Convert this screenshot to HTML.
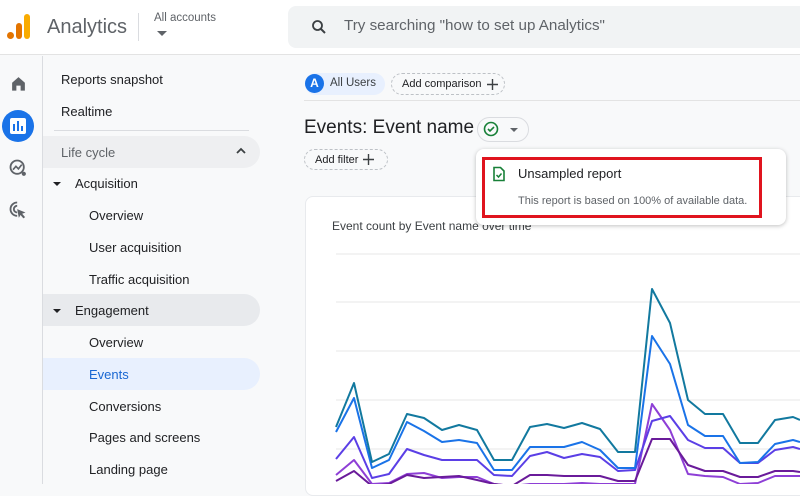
<!DOCTYPE html>
<html><head><style>
*{margin:0;padding:0;box-sizing:border-box}
body{width:800px;height:484px;overflow:hidden;background:#f8f9fa;font-family:"Liberation Sans",Arial,sans-serif;color:#202124;position:relative}
.abs{position:absolute}
.hdr{left:0;top:0;width:800px;height:55px;background:#fff;border-bottom:1px solid #e3e3e3}
.nav{left:42px;top:56px;width:1px;height:428px;background:#dadce0}
.item{position:absolute;font-size:13px;white-space:nowrap}
.pill{position:absolute;left:43px;width:217px;height:32px;border-radius:0 16px 16px 0}
.chip{position:absolute;height:22px;border-radius:11px;border:1px dashed #bdc1c6;font-size:11px;display:flex;align-items:center;padding-left:10px;color:#202124;white-space:nowrap}
.chip svg{margin-left:5px}
</style></head><body>
<div class="abs hdr"></div>
<div class="abs" style="left:7px;top:32px;width:7px;height:7px;border-radius:50%;background:#e37400"></div>
<div class="abs" style="left:16px;top:23px;width:6px;height:16px;border-radius:3px;background:#e37400"></div>
<div class="abs" style="left:24px;top:14px;width:6px;height:25px;border-radius:3px;background:#f9ab00"></div>
<div class="abs" style="left:47px;top:16px;font-size:20px;color:#5f6368">Analytics</div>
<div class="abs" style="left:138px;top:13px;width:1px;height:28px;background:#dadce0"></div>
<div class="abs" style="left:154px;top:12px;font-size:11.5px;color:#5f6368">All accounts</div>
<div class="abs" style="left:157px;top:31px;width:0;height:0;border-left:5px solid transparent;border-right:5px solid transparent;border-top:5px solid #5f6368"></div>
<div class="abs" style="left:288px;top:6px;width:520px;height:42px;background:#f1f3f4;border-radius:8px"></div>
<svg class="abs" style="left:310px;top:18px" width="18" height="18" viewBox="0 0 24 24"><circle cx="10" cy="10" r="6" fill="none" stroke="#3c4043" stroke-width="2.4"/><path d="M14.5 14.5L20 20" stroke="#3c4043" stroke-width="2.6"/></svg>
<div class="abs" style="left:344px;top:17px;font-size:15.2px;color:#5f6368">Try searching "how to set up Analytics"</div>
<div class="abs nav"></div>
<svg class="abs" style="left:10px;top:75px" width="17" height="17" viewBox="0 0 24 24"><path d="M3 11L12 3l9 8v11h-6v-7H9v7H3z" fill="#5f6368"/></svg>
<div class="abs" style="left:2px;top:110px;width:32px;height:32px;border-radius:50%;background:#1a73e8"></div>
<div class="abs" style="left:10px;top:118px;width:16px;height:16px;border-radius:2px;background:#fff"></div>
<div class="abs" style="left:13px;top:124px;width:2px;height:7px;background:#1a73e8"></div>
<div class="abs" style="left:17px;top:121px;width:2px;height:10px;background:#1a73e8"></div>
<div class="abs" style="left:21px;top:126px;width:2px;height:5px;background:#1a73e8"></div>
<svg class="abs" style="left:8px;top:158px" width="20" height="20" viewBox="0 0 24 24"><circle cx="11" cy="11" r="8" fill="none" stroke="#5f6368" stroke-width="2.2"/><path d="M6 14l3.5-4 3 3 4-5" fill="none" stroke="#5f6368" stroke-width="2"/><circle cx="19" cy="19" r="2.5" fill="#5f6368"/></svg>
<svg class="abs" style="left:8px;top:200px" width="20" height="20" viewBox="0 0 24 24"><path d="M11 3a8 8 0 1 0 0 16" fill="none" stroke="#5f6368" stroke-width="2.2"/><path d="M11 7a4 4 0 1 0 0 8" fill="none" stroke="#5f6368" stroke-width="2.2"/><path d="M11 11l10 4-4 1.5 3.5 4-2 1.5-3.5-4-2 3.5z" fill="#5f6368"/></svg>
<div class="item" style="left:61px;top:72px">Reports snapshot</div>
<div class="item" style="left:61px;top:104px">Realtime</div>
<div class="abs" style="left:54px;top:130px;width:195px;height:1px;background:#dadce0"></div>
<div class="pill" style="top:136px;background:#eeeff1"></div>
<div class="item" style="left:61px;top:145px;color:#5f6368">Life cycle</div>
<svg class="abs" style="left:235px;top:146px" width="12" height="10" viewBox="0 0 12 10"><path d="M2 7l4-4 4 4" fill="none" stroke="#3c4043" stroke-width="1.8"/></svg>
<div class="abs" style="left:53px;top:182px;border-left:4px solid transparent;border-right:4px solid transparent;border-top:4px solid #202124"></div>
<div class="item" style="left:75px;top:176px">Acquisition</div>
<div class="item" style="left:89px;top:208px">Overview</div>
<div class="item" style="left:89px;top:240px">User acquisition</div>
<div class="item" style="left:89px;top:272px">Traffic acquisition</div>
<div class="pill" style="top:294px;background:#e8eaed"></div>
<div class="abs" style="left:53px;top:309px;border-left:4px solid transparent;border-right:4px solid transparent;border-top:4px solid #202124"></div>
<div class="item" style="left:75px;top:303px">Engagement</div>
<div class="item" style="left:89px;top:335px">Overview</div>
<div class="pill" style="top:358px;background:#e8f0fe"></div>
<div class="item" style="left:89px;top:367px;color:#1967d2">Events</div>
<div class="item" style="left:89px;top:399px">Conversions</div>
<div class="item" style="left:89px;top:430px">Pages and screens</div>
<div class="item" style="left:89px;top:462px">Landing page</div>
<div class="abs" style="left:305px;top:73px;width:80px;height:22px;border-radius:11px;background:#e8f0fe"></div>
<div class="abs" style="left:305px;top:74px;width:19px;height:19px;border-radius:50%;background:#1a73e8;color:#fff;font-size:12px;font-weight:bold;text-align:center;line-height:19px">A</div>
<div class="abs" style="left:330px;top:77px;font-size:11.5px;color:#3c4043">All Users</div>
<div class="chip" style="left:391px;top:73px;width:114px">Add comparison<svg width="11" height="11" viewBox="0 0 11 11"><path d="M5.5 0v11M0 5.5h11" stroke="#3c4043" stroke-width="1.4"/></svg></div>
<div class="abs" style="left:304px;top:100px;width:496px;height:1px;background:#e3e3e3"></div>
<div class="abs" style="left:304px;top:117px;font-size:19px;color:#202124">Events: Event name</div>
<div class="abs" style="left:477px;top:117px;width:52px;height:25px;border-radius:13px;border:1px solid #dadce0"></div>
<svg class="abs" style="left:483px;top:121px" width="16" height="16" viewBox="0 0 16 16"><circle cx="8" cy="8" r="6.5" fill="none" stroke="#188038" stroke-width="1.6"/><path d="M5 8l2 2 4-4" fill="none" stroke="#188038" stroke-width="1.6"/></svg>
<div class="abs" style="left:510px;top:128px;border-left:4px solid transparent;border-right:4px solid transparent;border-top:4px solid #5f6368"></div>
<div class="chip" style="left:304px;top:149px;width:84px;height:21px">Add filter<svg width="11" height="11" viewBox="0 0 11 11"><path d="M5.5 0v11M0 5.5h11" stroke="#3c4043" stroke-width="1.4"/></svg></div>
<div class="abs" style="left:305px;top:196px;width:510px;height:300px;background:#fff;border-radius:8px;border:1px solid #e8eaed"></div>
<div class="abs" style="left:332px;top:219px;font-size:12px;color:#3c4043">Event count by Event name over time</div>
<svg class="abs" style="left:0;top:0" width="800" height="484">
<g stroke="#ececec" stroke-width="1.3"><path d="M336 254H800M336 302H800M336 351H800M336 400H800M336 449H800"/></g>
<g fill="none" stroke-width="2" stroke-linejoin="round">
<polyline stroke="#8e3fd6" points="336,475 354,460 372,484 389,483 407,474 424,473 442,478 459,477 477,477 494,484 512,486 530,484 547,484 564,484 582,483 600,484 618,484 635,484 652,404 670,430 688,474 705,476 723,477 740,484 758,483 775,476 793,476 800,476"/>
<polyline stroke="#6a1b9a" points="336,481 354,471 372,486 389,484 407,475 424,478 442,477 459,476 477,480 494,484 512,486 530,475 547,475 564,476 582,476 600,476 618,481 635,481 652,439 670,439 688,465 705,471 723,471 740,477 758,477 775,471 793,471 800,472"/>
<polyline stroke="#5b3fe6" points="336,459 354,437 372,478 389,474 407,449 424,455 442,460 459,460 477,460 494,475 512,476 530,456 547,452 564,458 582,454 600,457 618,471 635,470 652,421 670,416 688,440 705,448 723,448 740,463 758,463 775,450 793,447 800,449"/>
<polyline stroke="#1a73e8" points="336,432 354,398 372,468 389,460 407,422 424,431 442,442 459,440 477,443 494,470 512,470 530,447 547,447 564,447 582,442 600,450 618,468 635,468 652,336 670,364 688,425 705,436 723,436 740,463 758,462 775,444 793,440 800,442"/>
<polyline stroke="#12799f" points="336,427 354,383 372,462 389,454 407,414 424,418 442,430 459,425 477,430 494,460 512,460 530,427 547,424 564,428 582,423 600,429 618,452 635,452 652,289 670,323 688,400 705,414 723,414 740,443 758,443 775,420 793,417 800,420"/>
</g></svg>
<div class="abs" style="left:476px;top:149px;width:310px;height:76px;background:#fff;border-radius:8px;box-shadow:0 1px 4px rgba(0,0,0,.25)"></div>
<div class="abs" style="left:482px;top:157px;width:280px;height:61px;border:3px solid #e0141e"></div>
<svg class="abs" style="left:492px;top:166px" width="14" height="16" viewBox="0 0 14 16"><path d="M2 1.5h6.5l3.5 3.5v9.5H2z" fill="none" stroke="#188038" stroke-width="1.6"/><path d="M4.5 9l2 2 3-3.5" fill="none" stroke="#188038" stroke-width="1.5"/></svg>
<div class="abs" style="left:518px;top:166px;font-size:13px;color:#202124">Unsampled report</div>
<div class="abs" style="left:518px;top:195px;font-size:11px;color:#5f6368">This report is based on 100% of available data.</div>
</body></html>
